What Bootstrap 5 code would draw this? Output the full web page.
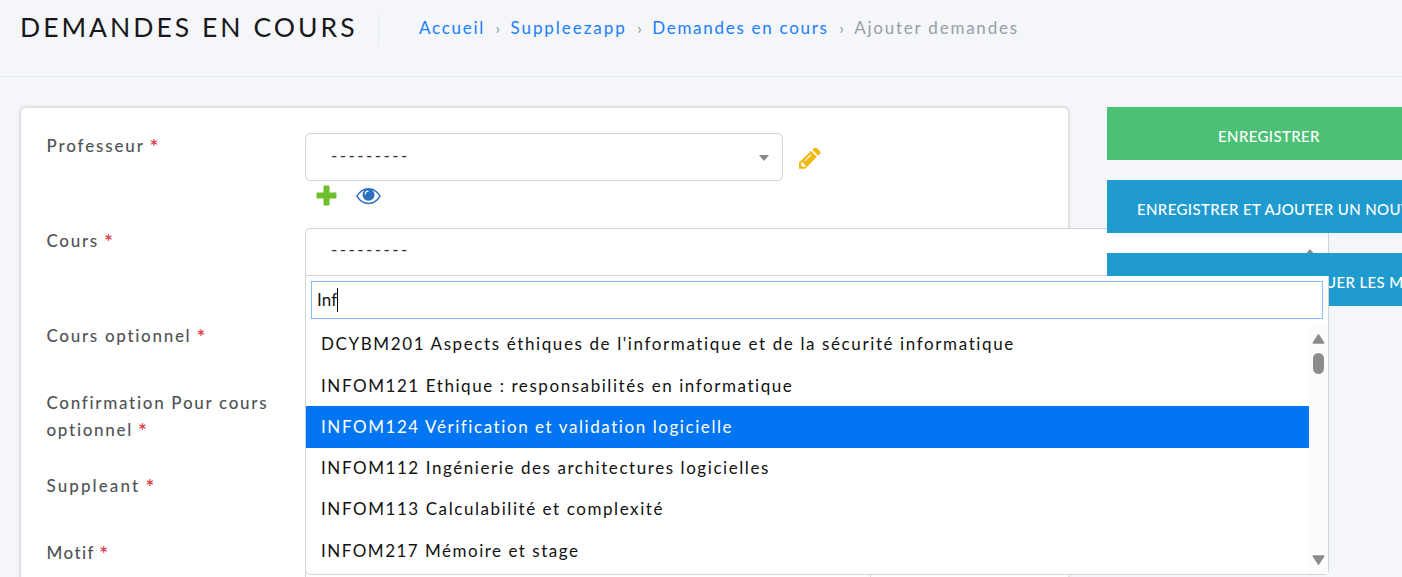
<!DOCTYPE html>
<html lang="fr">
<head>
<meta charset="utf-8">
<title>Ajouter demandes</title>
<link href="https://cdn.jsdelivr.net/npm/bootstrap@5.3.0/dist/css/bootstrap.min.css" rel="stylesheet">
<style>
body{font:17px/27px Lato,sans-serif;background:#f4f6fa;color:#111;height:577px;overflow:hidden;font-variant-ligatures:none}
.topbar{height:77px;border-bottom:1px solid #e9ecef;padding-left:20px}
.topbar h1{font-size:26.5px;line-height:29px;letter-spacing:3.02px;width:359px;height:33px;margin:13px 40px 0 0;border-right:1px solid #e9ecef;color:#181818;font-weight:400;white-space:nowrap}
.crumbs{margin-top:14px;letter-spacing:1.72px;white-space:nowrap;color:#999fa3}
.crumbs a{color:#1a7efb;text-decoration:none}
.crumbs i{font-style:normal;letter-spacing:0;color:#8c9196;font-size:16px;width:25.5px;text-align:center}
.crumbs .wider{letter-spacing:1.95px}
.crumbs span{letter-spacing:1.78px}
.page{padding:30px 0 0 20px}
.panel{width:1049px;height:500px;background:#fff;border:1px solid #dcdedf;border-radius:5px;box-shadow:0 0 2px 1px rgba(0,0,0,.09);padding:25px 0 0 25px}
.line{height:95px}
.line.short{height:67px}
.line.tall{height:83px}
.lbl{display:block;width:259px;color:#505457;letter-spacing:1.7px;font-weight:500;flex:none;padding:0 20px 0 .5px;margin-top:-1px}
.lbl b{color:#dc3545;font-weight:500;font-size:21px;line-height:0;position:relative;top:3px;letter-spacing:0;margin-left:-1px}
.sel{height:48px;border:1px solid #ced4da;border-radius:5px;background:#fff;padding:8px 13px 0 25px;color:#333;flex:none}
.dash{letter-spacing:2.42px}
.sel.one{width:478px}
.sel.wide{width:1024px;border-radius:5px 5px 0 0;padding-top:7px}
.sel.last{width:566px}
.caret{margin-top:13px}
.combo{width:1024px}
.menu{left:0;top:48px;width:1024px;height:299px;background:#fff;border:1px solid #ced4da;border-top:0;border-radius:0 0 5px 5px;z-index:20;padding-top:5px}
.search{margin:0 5px;height:38px;border:1px solid #80bdff;padding:4px 0 0 5px;color:#111;letter-spacing:.1px}
.search u{display:inline-block;width:1px;height:24px;background:#000;vertical-align:middle;margin-top:-4px}
.opts{height:250px;margin-top:5px}
.list{margin-top:-.6px}
.opt{height:41.25px;padding:7px 0 0 15px;letter-spacing:1.57px;white-space:nowrap}
.opt.long{letter-spacing:1.61px}
.opt.on{background:#0275f3;color:#fff;height:42px;margin-bottom:-.75px}
.bar{width:19px;background:#fcfcfc}
.act{z-index:10;margin-left:38px;width:324px;flex:none}
.act button{display:block;width:324px;height:53px;border:0;border-radius:0;background:#209bd0;color:#fff;font-size:15px;font-weight:500;line-height:20px;letter-spacing:.36px;text-align:left;white-space:nowrap;padding:5px 30px 0;margin-bottom:20px}
.act button.save{background:#4cc075;text-align:center}
</style>
</head>
<body>
<header class="topbar d-flex">
<h1>DEMANDES EN COURS</h1>
<nav class="crumbs d-flex"><a href="#">Accueil</a><i>›</i><a href="#" class="wider">Suppleezapp</a><i>›</i><a href="#">Demandes en cours</a><i>›</i><span>Ajouter demandes</span></nav>
</header>
<main class="page d-flex">
<form class="panel flex-shrink-0">
<div class="line d-flex">
<label class="lbl" style="letter-spacing:1.85px">Professeur <b>*</b></label>
<div>
<div class="d-flex align-items-start">
<div class="sel one d-flex justify-content-between"><span class="dash">---------</span><svg class="caret" width="10" height="6"><path d="M0 0h10L5 6z" fill="#888"/></svg></div>
<svg style="margin:13.5px 0 0 16px" width="22" height="22" viewBox="0 0 22 22"><path fill="#efb80b" d="M0 15.500 12 4 17.800 9.800 6.200 21.700H0z"/><path fill="#efb80b" d="M13.300 2.800 15.300 1q1.200-1 2.300 0l3.500 3.500q1 1 .1 2.200L19.200 8.700z"/><path d="M5.700 13.900 12.200 7.700" stroke="#fff" stroke-width="1.100"/><path fill="#fff" d="m2 16.200 1.300-1.200 1.100.7.400 1.700 1.600.3.500 1-1.300 1.400-2-.2L2 18z"/></svg>
</div>
<div class="d-flex align-items-center" style="padding:4px 0 0 11px">
<svg width="21" height="21" viewBox="0 0 21 21"><path fill="#6fbe2c" d="M8.500.5h4q1 0 1 1v6h6q1 0 1 1v4q0 1-1 1h-6v6q0 1-1 1h-4q-1 0-1-1v-6h-6q-1 0-1-1v-4q0-1 1-1h6v-6q0-1 1-1z"/></svg>
<svg style="margin-left:19px" width="25" height="18" viewBox="0 0 26 18"><path d="M1 9.200Q5.500 1.400 13 1.400T25 9.200Q20.500 16.800 13 16.800T1 9.200z" fill="#fff" stroke="#2b6fc0" stroke-width="1.600"/><circle cx="13" cy="7.700" r="6.300" fill="#2b6fc0"/><path d="M9.500 7.500Q9.500 4 13 4" fill="none" stroke="#fff" stroke-width="1.200"/></svg>
</div>
</div>
</div>
<div class="line d-flex">
<label class="lbl">Cours <b>*</b></label>
<div class="combo position-relative flex-shrink-0">
<div class="sel wide d-flex justify-content-between"><span class="dash">---------</span><svg class="caret" width="10" height="6"><path d="M0 6h10L5 0z" fill="#888"/></svg></div>
<div class="menu position-absolute">
<div class="search">Inf<u></u></div>
<div class="opts d-flex">
<div class="list flex-grow-1">
<div class="opt long">DCYBM201 Aspects éthiques de l'informatique et de la sécurité informatique</div>
<div class="opt">INFOM121 Ethique : responsabilités en informatique</div>
<div class="opt on">INFOM124 Vérification et validation logicielle</div>
<div class="opt">INFOM112 Ingénierie des architectures logicielles</div>
<div class="opt">INFOM113 Calculabilité et complexité</div>
<div class="opt" style="letter-spacing:1.5px">INFOM217 Mémoire et stage</div>
</div>
<div class="bar"><svg class="d-block" width="19" height="250"><g fill="#8b8b8b" stroke="#8b8b8b" stroke-width="1.500" stroke-linejoin="round"><path d="M4.300 19 9.500 11l5.200 8zM4.300 232h10.400L9.500 240z"/></g><rect x="4" y="29" width="11" height="21" rx="5.500" fill="#8b8b8b"/></svg></div>
</div>
</div>
</div>
</div>
<div class="line short d-flex"><label class="lbl">Cours optionnel <b>*</b></label></div>
<div class="line tall d-flex"><label class="lbl">Confirmation Pour cours optionnel <b>*</b></label></div>
<div class="line short d-flex"><label class="lbl" style="letter-spacing:2.1px">Suppleant <b>*</b></label></div>
<div class="line d-flex"><label class="lbl" style="letter-spacing:1.4px">Motif <b>*</b></label><div class="sel last"></div></div>
</form>
<div class="act position-relative">
<button class="save">ENREGISTRER</button>
<button>ENREGISTRER ET AJOUTER UN NOUVEAU</button>
<button>ENREGISTRER ET CONTINUER LES MODIFICATIONS</button>
</div>
</main>
<script src="https://cdn.jsdelivr.net/npm/bootstrap@5.3.0/dist/js/bootstrap.bundle.min.js"></script>
</body>
</html>
